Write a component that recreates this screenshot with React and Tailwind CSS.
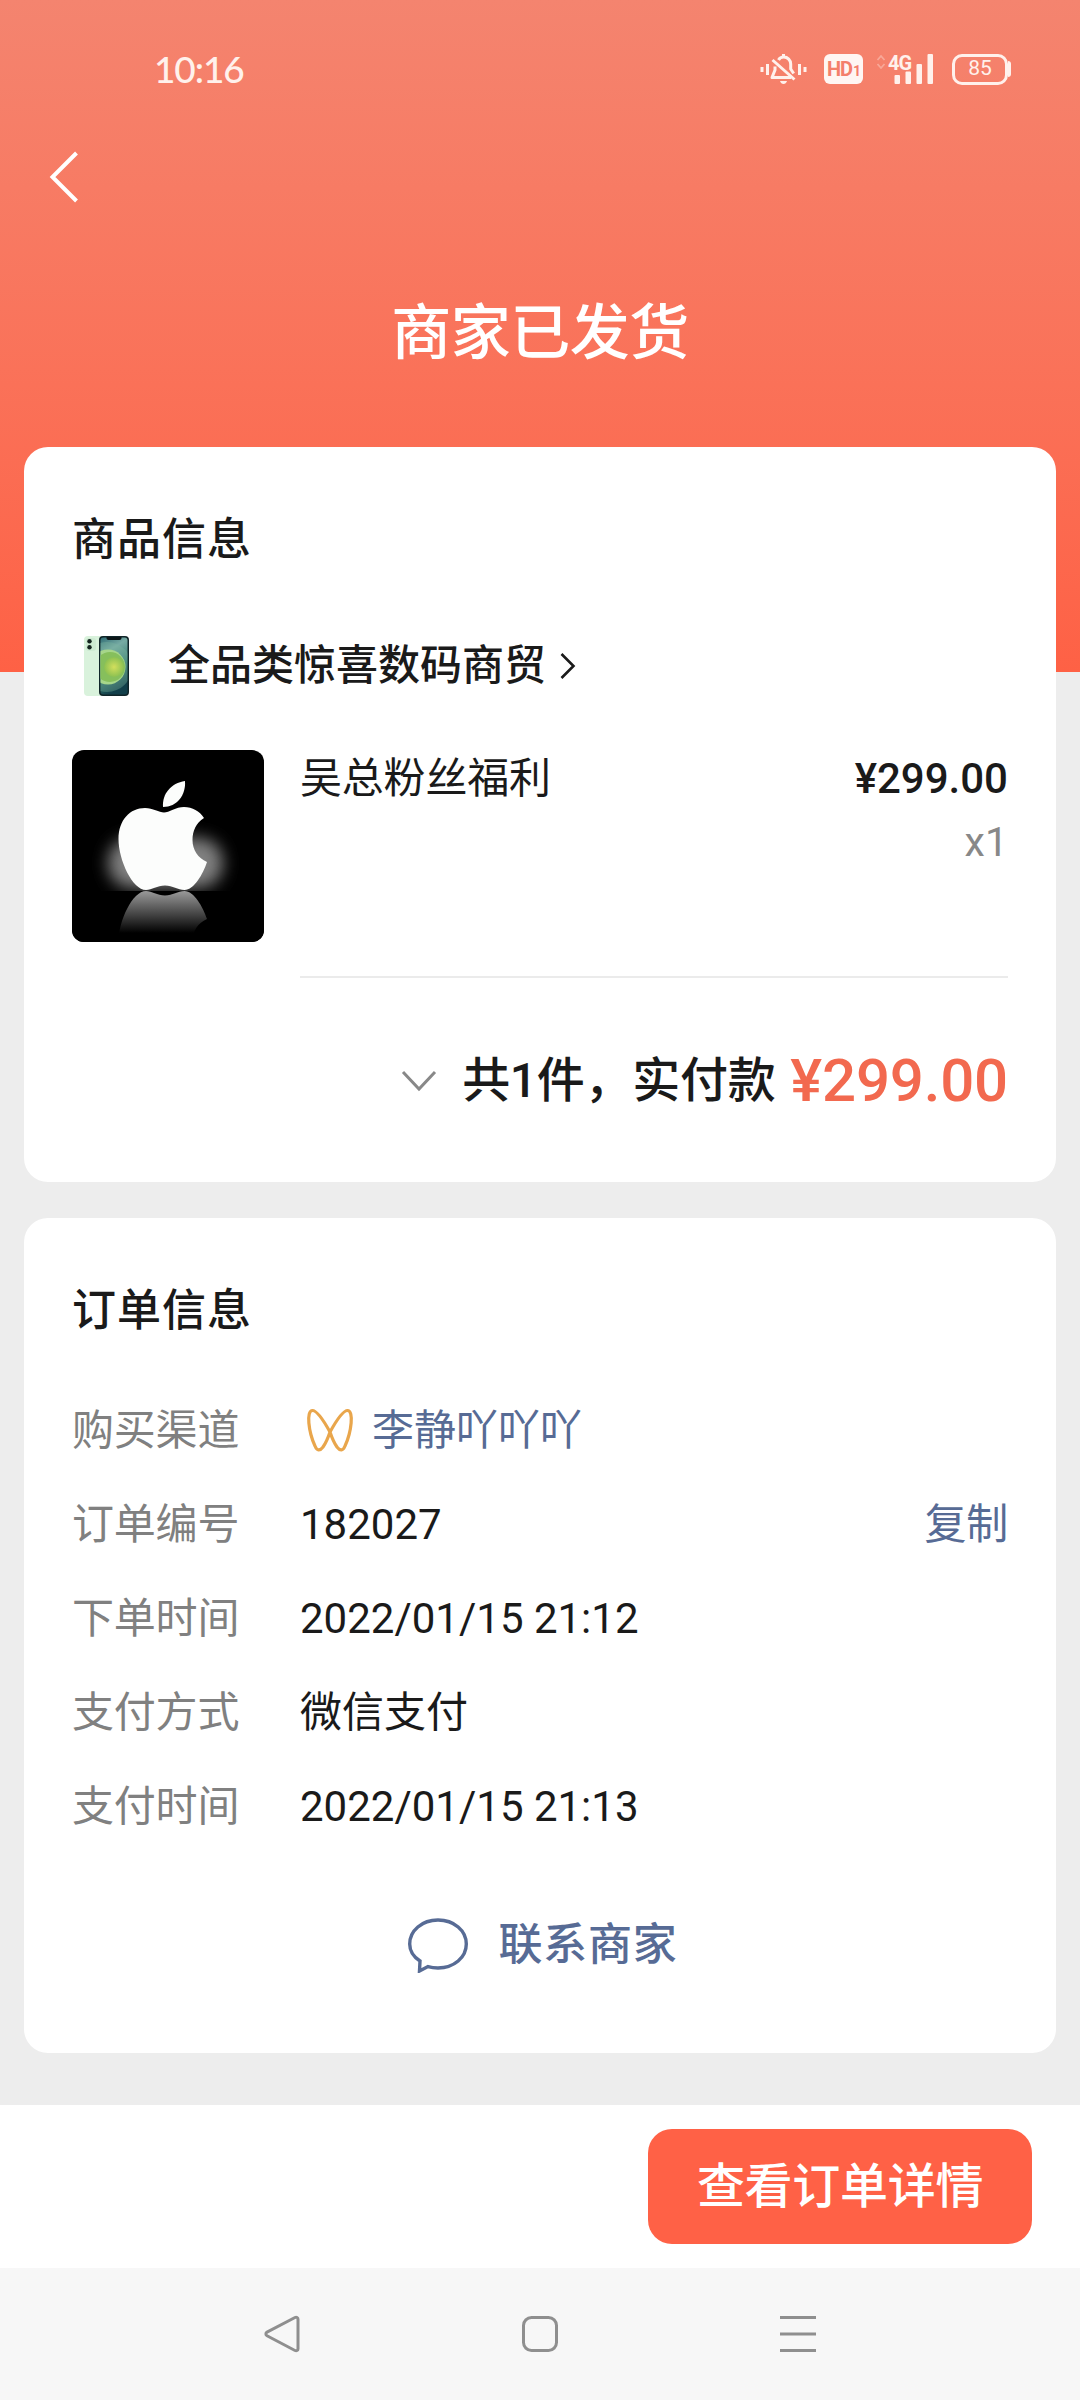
import { clsx } from "clsx";

const ORDER_ROWS = [
  { label: "购买渠道", value: "李静吖吖吖", channel: true },
  { label: "订单编号", value: "182027", copy: true },
  { label: "下单时间", value: "2022/01/15 21:12" },
  { label: "支付方式", value: "微信支付" },
  { label: "支付时间", value: "2022/01/15 21:13" },
];

function MuteIcon() {
  return (
    <svg width="48" height="32" viewBox="0 0 48 32" fill="none" stroke="currentColor">
      <path d="M2 14v5M7.500 11v11M39.500 11v11M45 14v5" strokeWidth="3" />
      <path
        d="M18.500 7c1-1.800 3-2.900 5.200-2.900 4 0 7 3 7 7V16l3 4.500M15 13.500V17l-3 7.500h19"
        strokeWidth="3"
        strokeLinejoin="round"
      />
      <path d="M12.500 7l22 19.500M23.500 1v3" strokeWidth="3" />
      <path d="M20 28h7c-.6 2-1.900 3-3.500 3s-2.900-1-3.500-3z" fill="currentColor" stroke="none" />
    </svg>
  );
}

function SignalIcon() {
  return (
    <div className="relative h-[30px] w-[58px]">
      <svg className="block" width="58" height="30" viewBox="0 0 58 30" fill="currentColor">
        <path
          d="M1.500 6l3.500-4 3.500 4M1.500 10l3.500 4 3.500-4"
          fill="none"
          stroke="currentColor"
          strokeWidth="1.800"
          opacity=".35"
        />
        <rect x="18.500" y="21" width="5.500" height="9" rx="1" />
        <rect x="29.500" y="17.500" width="5.500" height="12.500" rx="1" />
        <rect x="40.500" y="10" width="5.500" height="20" rx="1" />
        <rect x="51.500" y="0" width="5.500" height="30" rx="1" />
      </svg>
      <span className="absolute top-0 left-[12px] font-[Roboto] text-[20px] leading-[19px] font-bold tracking-[-1px]">
        4G
      </span>
    </div>
  );
}

function StatusBar() {
  return (
    <div className="flex h-[138px] items-start pt-[54px] pr-[69px] pl-[154px] text-[#fff1ec]">
      <span className="font-[Lato] text-[37px] leading-[30px] font-medium tracking-[-1.100px]">10:16</span>
      <div className="ml-auto flex h-[30px] items-center">
        <MuteIcon />
        <div className="ml-4 flex h-[30px] w-[39px] items-center justify-center rounded-[6px] bg-[#fff6f3] font-[Roboto] text-[20px] font-bold tracking-[-1px] text-[#f47f6b]">
          HD<span className="pt-1 pl-px text-[14px]">1</span>
        </div>
        <div className="ml-[13px]">
          <SignalIcon />
        </div>
        <div className="ml-[18px] flex h-[31px] w-[56px] items-center justify-center rounded-[10px] border-[3.500px] border-current font-[Roboto] text-[21px]">
          85
        </div>
        <div className="h-[16px] w-[3px] rounded-r-[3px] bg-current" />
      </div>
    </div>
  );
}

function PhoneThumb() {
  return (
    <svg width="48" height="64" viewBox="0 0 48 64">
      <defs>
        <linearGradient id="wall" x1="0" y1="0" x2=".3" y2="1">
          <stop offset="0" stopColor="#2c6a72" />
          <stop offset=".3" stopColor="#77aba4" />
          <stop offset=".65" stopColor="#3a7f72" />
          <stop offset="1" stopColor="#123f4a" />
        </linearGradient>
        <radialGradient id="orb">
          <stop offset="0" stopColor="#d3df5c" />
          <stop offset="1" stopColor="#8cc152" />
        </radialGradient>
        <clipPath id="screen">
          <rect x="17.500" y="3.500" width="27" height="57" rx="3" />
        </clipPath>
      </defs>
      <rect x="1" y="2" width="34" height="60" rx="4" fill="#d9f2dc" />
      <rect x="3" y="4" width="10" height="13" rx="3" fill="#cdebd2" />
      <circle cx="6.500" cy="7.300" r="2.200" fill="#14251f" />
      <circle cx="6.500" cy="13.300" r="2.200" fill="#14251f" />
      <rect x="16" y="2" width="30" height="60" rx="4" fill="#102529" />
      <g clipPath="url(#screen)">
        <rect x="17" y="3" width="28" height="58" fill="url(#wall)" />
        <circle cx="24" cy="33" r="25" fill="#7fb8a0" opacity=".35" />
        <circle cx="25" cy="33" r="17.500" fill="#a6d68a" />
        <circle cx="27" cy="33" r="15" fill="#86bf5c" />
        <circle cx="31" cy="33" r="10" fill="url(#orb)" />
      </g>
      <path d="M23.500 3h15v1c0 1.300-.8 2-2 2h-11c-1.200 0-2-.7-2-2z" fill="#0c1618" />
    </svg>
  );
}

const APPLE_BODY =
  "M73 58c8 0 14 4.500 19 4.500S104 57 112 57c8.500 0 15.500 4 20 11-8 5-11.500 13-11.500 22 0 10 5.500 18 14.500 22-4 12-13 28-22.500 28-7 0-11.500-4.500-19.500-4.500S80 140 74 140c-13.500 0-27.500-30-27.500-51 0-19 11.500-31 26.500-31z";

function ProductImage() {
  return (
    <svg className="block rounded-[12px]" width="192" height="192" viewBox="0 0 192 192">
      <defs>
        <filter id="soft" x="-30%" y="-50%" width="160%" height="200%">
          <feGaussianBlur stdDeviation="8" />
        </filter>
        {/* runs bottom-up because the mirrored shape is flipped */}
        <linearGradient id="mirror" gradientUnits="userSpaceOnUse" x1="0" y1="140" x2="0" y2="98">
          <stop offset="0" stopColor="#999" />
          <stop offset="1" stopColor="#000" />
        </linearGradient>
      </defs>
      <rect width="192" height="192" fill="#000" />
      <rect x="36" y="88" width="115" height="50" rx="24" fill="#808080" filter="url(#soft)" />
      <rect y="141" width="192" height="51" fill="#000" />
      <path d={APPLE_BODY} fill="url(#mirror)" transform="matrix(1 0 0 -1 0 281)" />
      <path d={APPLE_BODY} fill="#fcfdfc" />
      <path d="M113 31c1 14-8 26-22 26-1-13 8-24 22-26z" fill="#fcfdfc" />
    </svg>
  );
}

function ChannelIcon() {
  return (
    <svg width="48" height="44" viewBox="0 0 48 44" fill="none" stroke="#e9a64c" strokeWidth="3.200">
      <path
        d="M24 24C19 15 11.500 2.500 6.500 2.500 0 2.500 2.500 24 9 38c2 5 5 5 8 1 2.500-3.500 5-9 7-15zM24 24c5-9 12.500-21.500 17.500-21.500C48 2.500 45.500 24 39 38c-2 5-5 5-8 1-2.500-3.500-5-9-7-15z"
        strokeLinejoin="round"
      />
    </svg>
  );
}

function ProductCard() {
  return (
    <section className="mx-6 h-[735px] rounded-[24px] bg-white px-12">
      <h2 className="pt-[63px] text-[44px] leading-[60px] font-medium tracking-[1px]">商品信息</h2>
      <div className="mt-[64px] flex h-[64px] items-center">
        <div className="ml-[11px]">
          <PhoneThumb />
        </div>
        <span className="ml-[37px] text-[42px] leading-[60px] font-medium">全品类惊喜数码商贸</span>
        <svg className="ml-[13px]" width="18" height="28" viewBox="0 0 18 28" fill="none" stroke="#1a1a1a" strokeWidth="2.600">
          <path d="M2.500 2l12 12-12 12" />
        </svg>
      </div>
      <div className="mt-[52px] flex">
        <ProductImage />
        <div className="ml-9 flex h-[228px] grow justify-between border-b-2 border-[#ebebeb]">
          <span className="pt-px text-[42px] leading-[56px] tracking-[-0.200px]">吴总粉丝福利</span>
          <div className="pt-px text-right font-[Roboto]">
            <div className="text-[42px] leading-[56px] font-medium">¥299.00</div>
            <div className="text-[41px] leading-[70px] text-[#888]">x1</div>
          </div>
        </div>
      </div>
      <div className="mt-[63px] flex h-[80px] items-center justify-end">
        <svg width="36" height="24" viewBox="0 0 36 24" fill="none" stroke="#888" strokeWidth="3">
          <path d="M2 3l16 17L34 3" />
        </svg>
        <span className="ml-[25px] text-[48px] leading-[80px] font-medium tracking-[-0.300px]">共1件，实付款</span>
        <span className="ml-[15px] font-[Roboto] text-[60px] leading-[80px] font-medium tracking-[-0.200px] text-[#f2694f]">
          ¥299.00
        </span>
      </div>
    </section>
  );
}

function OrderCard() {
  return (
    <section className="mx-6 mt-9 h-[835px] rounded-[24px] bg-white px-12">
      <h2 className="pt-[63px] text-[44px] leading-[60px] font-medium tracking-[1px]">订单信息</h2>
      <div className="mt-[42px]">
        {ORDER_ROWS.map((row) => (
          <div key={row.label} className="flex h-[94.200px] items-center text-[42px]">
            <span className="w-[228px] tracking-[-0.200px] text-[#808080]">{row.label}</span>
            {row.channel && (
              <div className="mr-[18px] ml-[6px]">
                <ChannelIcon />
              </div>
            )}
            <span className={clsx(row.channel && "text-[#576b95]", /^\d/.test(row.value) && "font-[Roboto]")}>
              {row.value}
            </span>
            {row.copy && <button className="ml-auto tracking-[-0.200px] text-[#576b95]">复制</button>}
          </div>
        ))}
      </div>
      <div className="mt-[61px] flex items-center justify-center gap-[30px] pl-1 text-[#576b95]">
        <svg width="62" height="56" viewBox="0 0 62 56" fill="none" stroke="currentColor" strokeWidth="3.400">
          <path d="M13 44C6 39.500 2.700 33.500 2.700 27 2.700 13.500 15 3 31 3s28.300 10.500 28.300 24S47 51 31 51c-3.600 0-7-.5-10-1.400L12.500 54z" />
        </svg>
        <span className="text-[44px] leading-[60px] font-medium tracking-[0.700px]">联系商家</span>
      </div>
    </section>
  );
}

function NavBar() {
  return (
    <div className="flex h-[132px] items-center justify-center gap-[218px] bg-[#f7f7f7] text-[#8f8f8f]">
      <svg width="40" height="40" viewBox="0 0 40 40" fill="none" stroke="currentColor" strokeWidth="3">
        <path d="M33 3.500L5 18.200c-1.500.8-1.500 2.800 0 3.600L33 36.500c1.500.7 3 0 3-1.800V5.300c0-1.800-1.500-2.500-3-1.800z" />
      </svg>
      <svg width="40" height="40" viewBox="0 0 40 40" fill="none" stroke="currentColor" strokeWidth="3">
        <rect x="3.500" y="3.500" width="33" height="33" rx="8" />
      </svg>
      <svg width="40" height="40" viewBox="0 0 40 40" fill="none" stroke="currentColor" strokeWidth="3">
        <path d="M2 3.500h36M2 20h36M2 36.500h36" />
      </svg>
    </div>
  );
}

export default function App() {
  return (
    <div className="flex h-[2400px] w-[1080px] flex-col overflow-hidden bg-[#ededed] bg-linear-to-b from-[#f4846f] to-[#fe6145] bg-[length:100%_672px] bg-no-repeat font-[Roboto,'Noto_Sans_CJK_SC',sans-serif] text-[#1a1a1a]">
      <StatusBar />
      <button className="ml-[48px] h-[78px] w-[32px] text-white">
        <svg width="32" height="54" viewBox="0 0 32 54" fill="none" stroke="currentColor" strokeWidth="4">
          <path d="M28.500 3L4.500 27l24 24" />
        </svg>
      </button>
      <h1 className="mt-[78px] h-[153px] text-center text-[60px] leading-[80px] font-medium tracking-[-0.500px] text-white">
        商家已发货
      </h1>
      <ProductCard />
      <OrderCard />
      <footer className="mt-auto flex h-[163px] items-center justify-end bg-white pr-12">
        <button className="h-[115px] w-[384px] rounded-[24px] bg-[#ff6146] pt-px text-[48px] font-medium tracking-[-0.300px] text-white">
          查看订单详情
        </button>
      </footer>
      <NavBar />
    </div>
  );
}
